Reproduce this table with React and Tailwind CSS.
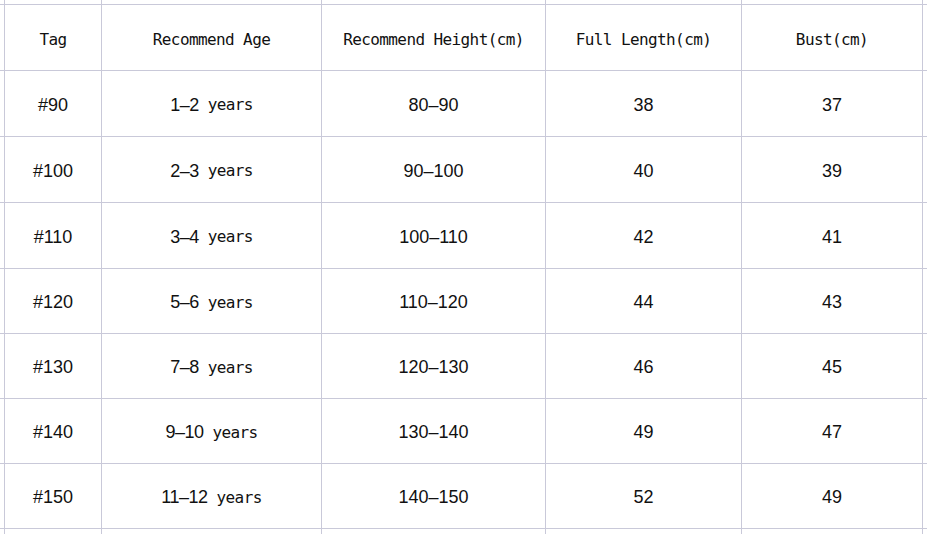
import React from "react";

const rows = [
  ["#90", "1-2", "80-90", "38", "37"],
  ["#100", "2-3", "90-100", "40", "39"],
  ["#110", "3-4", "100-110", "42", "41"],
  ["#120", "5-6", "110-120", "44", "43"],
  ["#130", "7-8", "120-130", "46", "45"],
  ["#140", "9-10", "130-140", "49", "47"],
  ["#150", "11-12", "140-150", "52", "49"],
];

const headers = ["Tag", "Recommend Age", "Recommend Height(cm)", "Full Length(cm)", "Bust(cm)"];

const mono = "font-['DejaVu_Sans_Mono','Liberation_Mono',monospace] text-[16px] tracking-[-0.6px]";
const sans = "font-['Liberation_Sans',Arial,sans-serif] text-[18px]";

function Blank() {
  return <div className="bg-white" />;
}

export default function App() {
  const cells = [];
  for (let i = 0; i < 7; i++) cells.push(<Blank key={`t${i}`} />);
  cells.push(<Blank key="hl" />);
  headers.forEach((h, i) => {
    cells.push(
      <div key={`h${i}`} className={`bg-white flex items-center justify-center text-[#111] pt-[4px] ${mono}`}>
        <span className="whitespace-pre">{h}</span>
      </div>
    );
  });
  cells.push(<Blank key="hr" />);
  rows.forEach((r, ri) => {
    cells.push(<Blank key={`l${ri}`} />);
    r.forEach((v, ci) => {
      if (ci === 1) {
        cells.push(
          <div key={`c${ri}-${ci}`} className="bg-white flex items-center justify-center text-[#111] pt-[3px]">
            <span className={`${sans} tracking-[-0.5px]`}>{v.replace("-", "\u2013")}</span>
            <span className={`${mono} whitespace-pre tracking-[-0.4px]`}> years</span>
          </div>
        );
      } else {
        cells.push(
          <div key={`c${ri}-${ci}`} className={`bg-white flex items-center justify-center text-[#111] pt-[3px] ${sans}`}>
            {v.replace("-", "\u2013")}
          </div>
        );
      }
    });
    cells.push(<Blank key={`r${ri}`} />);
  });
  for (let i = 0; i < 7; i++) cells.push(<Blank key={`b${i}`} />);

  return (
    <div className="w-[927px] h-[534px] overflow-hidden bg-white">
      <div className="grid h-full w-full gap-px bg-[#c9c9d9] grid-cols-[4px_96px_219px_223px_195px_180px_1fr] grid-rows-[4px_65px_65px_65px_65px_64px_64px_64px_64px_1fr]">
        {cells}
      </div>
    </div>
  );
}
